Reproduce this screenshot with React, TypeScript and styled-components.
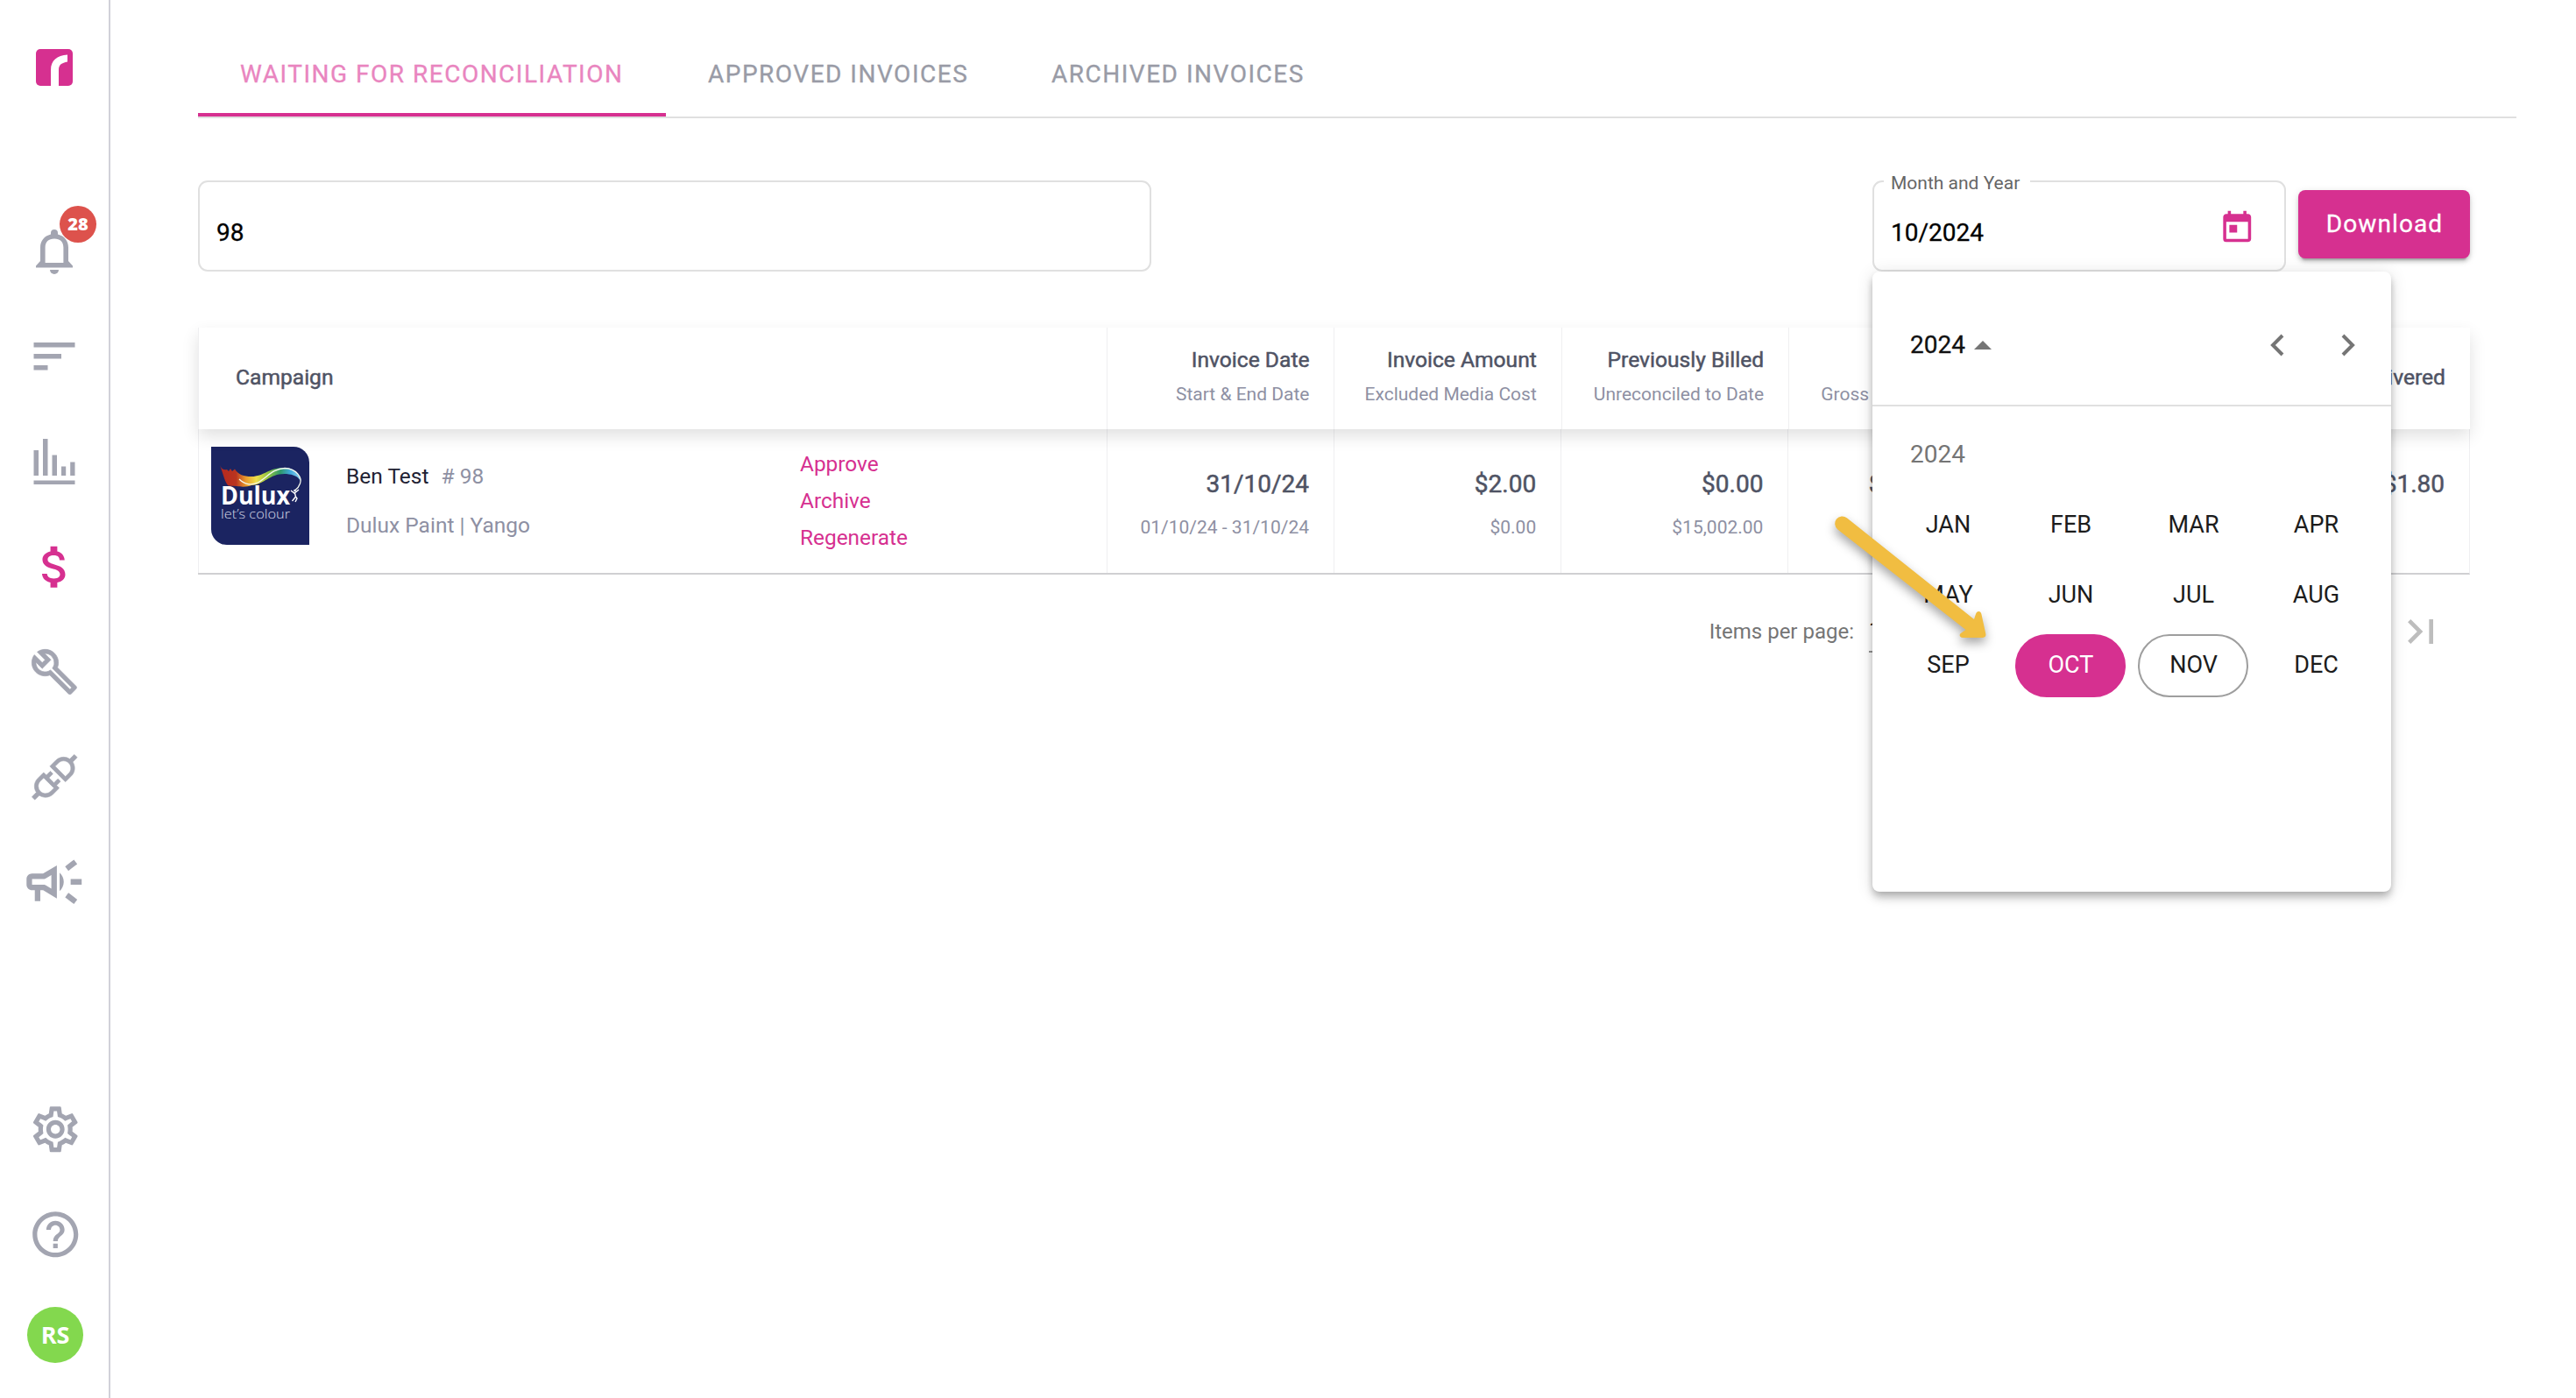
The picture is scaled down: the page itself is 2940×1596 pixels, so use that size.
import { useState } from 'react'
import styled, { createGlobalStyle } from 'styled-components'
import { AiOutlineApi } from 'react-icons/ai'
import {
  MdHelpOutline,
  MdLastPage,
  MdOutlineBuild,
  MdOutlineCampaign,
  MdOutlineSettings,
  MdToday,
} from 'react-icons/md'

const tabs = [
  { label: 'Waiting for reconciliation', width: 534 },
  { label: 'Approved invoices', width: 392 },
  { label: 'Archived invoices', width: 390 },
]

const columns = [
  { title: 'Invoice Date', sub: 'Start & End Date', value: '31/10/24', detail: '01/10/24 - 31/10/24' },
  { title: 'Invoice Amount', sub: 'Excluded Media Cost', value: '$2.00', detail: '$0.00' },
  { title: 'Previously Billed', sub: 'Unreconciled to Date', value: '$0.00', detail: '$15,002.00' },
  { title: 'Net', sub: 'Gross Campaign Fee', value: '$15,004.00', detail: '' },
  { title: 'Margin', sub: '', value: '$0.20', detail: '' },
  { title: 'Delivered', sub: '', value: '$1.80', detail: '' },
]

const months = ['JAN', 'FEB', 'MAR', 'APR', 'MAY', 'JUN', 'JUL', 'AUG', 'SEP', 'OCT', 'NOV', 'DEC']

function LogoMark() {
  return (
    <svg width="42" height="42" viewBox="0 0 42 42">
      <rect width="42" height="42" rx="5" fill="#d63090" />
      <path
        d="M17 42V24C17 13 24 7.600 36 6.600V14.600C29.500 16 26 17.500 26 24V42Z"
        fill="#fff"
      />
    </svg>
  )
}

function BellIcon() {
  return (
    <svg width="42" height="51" viewBox="0 0 42 51" fill="currentColor">
      <path
        fillRule="evenodd"
        d="M17 5.500V4a4 4 0 0 1 8 0v1.500C32.500 7.400 37 13 37 20.500V36l5 5.500V43.500H0V41.500L5 36V20.500C5 13 9.500 7.400 17 5.500ZM10.600 38H31.400V20.500C31.400 14 27.500 10.400 21 10.400S10.600 14 10.600 20.500Z"
      />
      <path d="M16 46h10a5 5 0 0 1-10 0Z" />
    </svg>
  )
}

function ListIcon() {
  return (
    <svg width="48" height="32" viewBox="0 0 48 32" fill="currentColor">
      <path d="M.5 0h47v5.500H.5zM.5 13h31.500v5.500H.5zM.5 26h16v5.500H.5z" />
    </svg>
  )
}

function ChartIcon() {
  return (
    <svg width="48" height="52" viewBox="0 0 48 52" fill="currentColor">
      <path d="M.5 13H6v29H.5zM11 0h5.500v42H11zM21.500 18.500H27V42h-5.500zM32 31.500h5.200V42H32zM42.200 26.500h5.300V42h-5.300zM.5 47.500h47V52H.5z" />
    </svg>
  )
}

function DollarIcon() {
  return (
    <svg width="62.500" height="62.500" viewBox="-0.200 0 24 24" fill="currentColor">
      <path d="M11.800 10.900c-2.270-.59-3-1.200-3-2.150 0-1.090 1.010-1.850 2.700-1.850 1.780 0 2.440.85 2.500 2.100h2.210c-.07-1.720-1.120-3.300-3.210-3.810V3h-3v2.160c-1.940.42-3.500 1.680-3.500 3.610 0 2.310 1.910 3.460 4.700 4.130 2.500.6 3 1.480 3 2.410 0 .69-.49 1.790-2.700 1.790-2.060 0-2.870-.92-2.980-2.100h-2.200c.12 2.190 1.760 3.420 3.680 3.830V21h3v-2.150c1.950-.37 3.500-1.500 3.500-3.550 0-2.840-2.430-3.810-4.700-4.400z" />
    </svg>
  )
}

function DuluxLogo() {
  return (
    <svg width="112" height="112" viewBox="0 0 112 112">
      <defs>
        <linearGradient id="ribbon" gradientUnits="userSpaceOnUse" x1="10" y1="0" x2="102" y2="0">
          <stop offset="0" stopColor="#b5281f" />
          <stop offset=".2" stopColor="#b93420" />
          <stop offset=".32" stopColor="#ea9a2c" />
          <stop offset=".45" stopColor="#f0e04a" />
          <stop offset=".6" stopColor="#8fc140" />
          <stop offset=".75" stopColor="#2f9a6a" />
          <stop offset=".87" stopColor="#3fa9dc" />
          <stop offset="1" stopColor="#8fd0ee" />
        </linearGradient>
      </defs>
      <rect width="112" height="112" fill="#1b2461" />
      <path
        d="M10 21C12 26 15 27 18 26L20 28 22 25 24 28 27 25.500C31 32 37 34 46 34C60 34 66 24 82 24C94 24 101 30 102 39C98 33 94 32 86 31C66 30 62 43 46 44C42 46 34 46 29 45L20 44.500C16 42 14 32 10 21Z"
        fill="url(#ribbon)"
      />
      <path
        d="M32 37C38 43 46 44.500 53 41C64 35 70 25 84 24.500C98 25 104 36 101.500 42C100.500 45 98 48 96 49.500"
        fill="none"
        stroke="#f4f8ee"
        strokeWidth="1.300"
      />
      <path
        d="M91 50l4 3 5-4M95.500 53l1 4-4 5M96.500 57l1.500 2-2 4"
        fill="none"
        stroke="#fff"
        strokeWidth="1.400"
      />
      <circle cx="95.500" cy="50" r="1.300" fill="#fff" />
      <BrandText x="11" y="65.500" textLength="79" lengthAdjust="spacingAndGlyphs">
        Dulux
      </BrandText>
      <BrandTagline x="11" y="81.500" textLength="79" lengthAdjust="spacingAndGlyphs">
        let’s colour
      </BrandTagline>
    </svg>
  )
}

function PointerArrow() {
  return (
    <ArrowLayer width="210" height="180" viewBox="0 0 210 180">
      <path
        d="M27.800 11.200L173 127L174.800 121.500C176 117 180.600 117 181.400 121L186.300 143.500C186.800 146.200 185.500 147.900 183 147.900H160C156.300 147.900 155.500 144.300 158.500 142.500L163.500 139L17.400 24.400A8.200 8.200 0 0 1 27.800 11.200Z"
        fill="#f1bd41"
      />
    </ArrowLayer>
  )
}

export default function App() {
  const [activeTab, setActiveTab] = useState(0)
  const [search, setSearch] = useState('98')
  const [month, setMonth] = useState('OCT')

  return (
    <Layout>
      <GlobalStyle />
      <Sidebar>
        <Brand>
          <LogoMark />
        </Brand>
        <NavItem>
          <BellIcon />
          <Badge>28</Badge>
        </NavItem>
        <NavItem>
          <ListIcon />
        </NavItem>
        <NavItem>
          <ChartIcon />
        </NavItem>
        <NavItem $active>
          <DollarIcon />
        </NavItem>
        <NavItem>
          <WrenchIcon size={56} />
        </NavItem>
        <NavItem>
          <PlugIcon size={64.5} />
        </NavItem>
        <NavItem>
          <MdOutlineCampaign size={75.5} />
        </NavItem>
        <NavFooter>
          <NavItem>
            <MdOutlineSettings size={62.5} />
          </NavItem>
          <NavItem>
            <MdHelpOutline size={62.5} />
          </NavItem>
          <Avatar>RS</Avatar>
        </NavFooter>
      </Sidebar>

      <Main>
        <TabBar>
          {tabs.map((tab, index) => (
            <Tab
              key={tab.label}
              $active={activeTab === index}
              $width={tab.width}
              onClick={() => setActiveTab(index)}>
              {tab.label}
            </Tab>
          ))}
        </TabBar>

        <Filters>
          <SearchInput value={search} onChange={(event) => setSearch(event.target.value)} />
          <DateField>
            <DateLabel>Month and Year</DateLabel>
            <DateValue>10/2024</DateValue>
            <CalendarIcon size={42.5} />
            <Calendar>
              <CalendarHeader>
                <PeriodButton>
                  2024
                  <Triangle />
                </PeriodButton>
                <Arrows>
                  <Chevron viewBox="0 0 16 26">
                    <path d="M14 2L3 13L14 24" />
                  </Chevron>
                  <Chevron viewBox="0 0 16 26">
                    <path d="M2 2L13 13L2 24" />
                  </Chevron>
                </Arrows>
              </CalendarHeader>
              <YearLabel>2024</YearLabel>
              <MonthGrid>
                {months.map((name) => (
                  <Month
                    key={name}
                    $selected={month === name}
                    $today={name === 'NOV'}
                    onClick={() => setMonth(name)}>
                    {name}
                  </Month>
                ))}
              </MonthGrid>
            </Calendar>
            <PointerArrow />
          </DateField>
          <DownloadButton>Download</DownloadButton>
        </Filters>

        <Table>
          <HeaderRow>
            <CampaignHeader>Campaign</CampaignHeader>
            {columns.map((column) => (
              <HeaderCell key={column.title}>
                <HeaderTitle>{column.title}</HeaderTitle>
                {column.sub && <HeaderSub>{column.sub}</HeaderSub>}
              </HeaderCell>
            ))}
          </HeaderRow>
          <Row>
            <CampaignCell>
              <LogoFrame>
                <DuluxLogo />
              </LogoFrame>
              <CampaignInfo>
                <CampaignName>
                  Ben Test <CampaignId># 98</CampaignId>
                </CampaignName>
                <Client>Dulux Paint | Yango</Client>
              </CampaignInfo>
              <Actions>
                <Action>Approve</Action>
                <Action>Archive</Action>
                <Action>Regenerate</Action>
              </Actions>
            </CampaignCell>
            {columns.map((column) => (
              <Cell key={column.title}>
                <Value>{column.value}</Value>
                <Detail>{column.detail}</Detail>
              </Cell>
            ))}
          </Row>
        </Table>

        <Paginator>
          <span>Items per page:</span>
          <PageSize>10</PageSize>
          <MdLastPage size={56} color="#bdbdbd" />
        </Paginator>
      </Main>
    </Layout>
  )
}

const GlobalStyle = createGlobalStyle`
  * {
    box-sizing: border-box;
  }
  body {
    margin: 0;
    background: #fff;
    font-family: Roboto, 'Liberation Sans', sans-serif;
  }
  button, input {
    font-family: inherit;
    border: none;
    background: none;
    padding: 0;
    margin: 0;
    outline: none;
  }
  svg {
    display: block;
    flex-shrink: 0;
  }
`

const Layout = styled.div`
  display: flex;
  width: 2940px;
  height: 1596px;
  overflow: hidden;
`

const Sidebar = styled.nav`
  display: flex;
  flex-direction: column;
  align-items: center;
  width: 126px;
  height: 100%;
  border-right: 2px solid #d1d1d9;
  color: #a3a5b1;
`

const Brand = styled.div`
  height: 227px;
  padding-top: 56px;
`

const NavItem = styled.div<{ $active?: boolean }>`
  position: relative;
  display: flex;
  align-items: center;
  justify-content: center;
  width: 124px;
  height: 120px;
  color: ${({ $active }) => ($active ? '#d63090' : 'inherit')};
`

const WrenchIcon = styled(MdOutlineBuild)`
  stroke-width: 0.3px;
  /* bounding path of the icon must stay invisible */
  path[fill='none'] {
    stroke: none;
  }
`

const PlugIcon = styled(AiOutlineApi)`
  stroke-width: 10px;
`

const Badge = styled.span`
  position: absolute;
  left: 68px;
  top: 8px;
  width: 42px;
  height: 42px;
  border-radius: 50%;
  background: #dd524c;
  color: #fff;
  font: 800 20px/41px 'Open Sans', 'Noto Sans', sans-serif;
  text-align: center;
`

const NavFooter = styled.div`
  display: flex;
  flex-direction: column;
  align-items: center;
  margin-top: auto;
  padding: 0 0 40px 2px;
`

const Avatar = styled.div`
  width: 64px;
  height: 64px;
  margin-top: 23px;
  border-radius: 50%;
  background: #83d84e;
  color: #fff;
  font: 700 27px/64px 'Open Sans', 'Noto Sans', sans-serif;
  text-align: center;
`

const Main = styled.main`
  flex: 1;
  padding: 36px 68px 0 100px;
`

const TabBar = styled.div`
  display: flex;
  height: 99px;
  border-bottom: 2px solid #e0e0e0;
`

const Tab = styled.button<{ $active: boolean; $width: number }>`
  width: ${({ $width }) => $width}px;
  height: 97px;
  padding: 0 0 0 48px;
  text-align: left;
  text-transform: uppercase;
  font-size: 28px;
  letter-spacing: 1.5px;
  white-space: nowrap;
  color: ${({ $active }) => ($active ? '#e985bf' : '#999ba6')};
  -webkit-text-stroke: 0.3px currentColor;
  box-shadow: ${({ $active }) => ($active ? 'inset 0 -4px 0 #d63090' : 'none')};
`

const Filters = styled.div`
  display: flex;
  align-items: flex-start;
  margin-top: 71px;
`

const SearchInput = styled.input`
  width: 1088px;
  height: 104px;
  padding: 14px 20px 0 19px;
  border: 2px solid #e0e0e0;
  border-radius: 11px;
  font-size: 28px;
  color: #000;
  -webkit-text-stroke: 0.3px currentColor;
`

const DateField = styled.div`
  position: relative;
  display: flex;
  align-items: center;
  justify-content: space-between;
  width: 472px;
  height: 104px;
  margin-left: 823px;
  padding: 0 33px 0 19px;
  border: 2px solid #e0e0e0;
  border-radius: 11px;
`

const DateLabel = styled.label`
  position: absolute;
  left: 11px;
  top: -12px;
  padding: 0 12px 0 8px;
  background: #fff;
  font-size: 21px;
  line-height: 26px;
  color: #666;
`

const DateValue = styled.span`
  padding-top: 14px;
  font-size: 28px;
  color: #000;
  -webkit-text-stroke: 0.3px currentColor;
`

const CalendarIcon = styled(MdToday)`
  margin-top: 5px;
  color: #d63090;
`

const Calendar = styled.div`
  position: absolute;
  z-index: 2;
  left: -2px;
  top: 102px;
  width: 592px;
  height: 708px;
  border-radius: 8px;
  background: #fff;
  box-shadow:
    0 4px 8px -2px rgba(0, 0, 0, 0.2),
    0 8px 10px rgba(0, 0, 0, 0.14),
    0 2px 20px rgba(0, 0, 0, 0.12);
`

const CalendarHeader = styled.div`
  display: flex;
  align-items: center;
  justify-content: space-between;
  height: 154px;
  padding: 15px 41px 0 43px;
  border-bottom: 2px solid #e0e0e0;
`

const PeriodButton = styled.button`
  display: flex;
  align-items: center;
  gap: 10px;
  font-size: 28px;
  color: #111;
  -webkit-text-stroke: 0.3px currentColor;
`

const Triangle = styled.span`
  border: 10px solid transparent;
  border-top: 0;
  border-bottom: 10px solid #757575;
`

const Arrows = styled.div`
  display: flex;
  gap: 65px;
`

const Chevron = styled.svg`
  width: 16px;
  height: 26px;
  fill: none;
  stroke: #757575;
  stroke-width: 4px;
`

const YearLabel = styled.div`
  height: 96px;
  padding: 35px 43px 0;
  font-size: 28px;
  line-height: 40px;
  color: #757575;
`

const MonthGrid = styled.div`
  display: grid;
  grid-template-columns: repeat(4, 140px);
  grid-auto-rows: 80px;
  padding: 0 16px;
`

const Month = styled.button<{ $selected: boolean; $today: boolean }>`
  margin: 4px 7px;
  padding: 0 0 3px 1px;
  border: 2px solid ${({ $selected, $today }) =>
    $selected ? '#d63090' : $today ? '#9e9e9e' : 'transparent'};
  border-radius: 36px;
  background: ${({ $selected }) => ($selected ? '#d63090' : 'transparent')};
  color: ${({ $selected }) => ($selected ? '#fff' : '#1c1c1c')};
  font-size: 27px;
`

const ArrowLayer = styled.svg`
  position: absolute;
  z-index: 3;
  left: -59px;
  top: 372px;
  overflow: visible;
  filter: drop-shadow(0 6px 6px rgba(0, 0, 0, 0.35));
`

const DownloadButton = styled.button`
  width: 196px;
  height: 78px;
  margin: 11px 0 0 14px;
  padding: 0 0 2px 1px;
  border-radius: 8px;
  background: #d63090;
  color: #fff;
  font-size: 28px;
  letter-spacing: 1.1px;
  -webkit-text-stroke: 0.3px currentColor;
  box-shadow:
    0 6px 2px -4px rgba(0, 0, 0, 0.2),
    0 4px 4px rgba(0, 0, 0, 0.14),
    0 2px 10px rgba(0, 0, 0, 0.12);
`

const Table = styled.div`
  width: 2593px;
  margin-top: 64px;
`

const HeaderRow = styled.div`
  position: relative;
  display: grid;
  grid-template-columns: 4fr repeat(6, 1fr);
  height: 116px;
  background: #fff;
  box-shadow: 0 8px 18px rgba(0, 0, 0, 0.12);
`

const CampaignHeader = styled.div`
  padding-left: 42px;
  border-left: 1px solid #efeff1;
  font-size: 24.6px;
  line-height: 114px;
  color: #4f5364;
  -webkit-text-stroke: 0.5px currentColor;
`

const HeaderCell = styled.div`
  display: flex;
  flex-direction: column;
  justify-content: center;
  align-items: flex-end;
  padding: 0 28px 3px 0;
  border-left: 1px solid #efeff1;
`

const HeaderTitle = styled.div`
  font-size: 24.6px;
  line-height: 39px;
  color: #4f5364;
  -webkit-text-stroke: 0.5px currentColor;
`

const HeaderSub = styled.div`
  font-size: 21px;
  line-height: 40px;
  white-space: nowrap;
  color: #8e90a3;
`

const Row = styled.div`
  display: grid;
  grid-template-columns: 4fr repeat(6, 1fr);
  height: 166px;
  border-right: 1px solid #efeff1;
  border-bottom: 2px solid #d0d0d2;
`

const CampaignCell = styled.div`
  display: flex;
  padding: 20px 0 0 14px;
  border-left: 1px solid #efeff1;
`

const LogoFrame = styled.div`
  width: 112px;
  height: 112px;
  border-radius: 0 18px 0 18px;
  overflow: hidden;
`

const BrandText = styled.text`
  font: 700 28px 'Open Sans', 'Noto Sans', sans-serif;
  fill: #fff;
`

const BrandTagline = styled.text`
  font: 300 15px 'Open Sans', 'Noto Sans', sans-serif;
  fill: #d8dbe8;
`

const CampaignInfo = styled.div`
  width: 560px;
  padding: 6px 0 0 42px;
  line-height: 56px;
`

const CampaignName = styled.div`
  font-size: 24.5px;
  color: #1f2233;
`

const CampaignId = styled.span`
  margin-left: 8px;
  color: #8e90a3;
`

const Client = styled.div`
  font-size: 24.5px;
  color: #8e90a3;
`

const Actions = styled.div`
  display: flex;
  flex-direction: column;
  align-items: flex-start;
  margin-top: -1px;
`

const Action = styled.button`
  font-size: 24.4px;
  line-height: 42px;
  color: #d63090;
`

const Cell = styled.div`
  padding: 43px 28px 0 0;
  border-left: 1px solid #efeff1;
  text-align: right;
`

const Value = styled.div`
  font-size: 28px;
  line-height: 40px;
  color: #4f5364;
  -webkit-text-stroke: 0.5px currentColor;
`

const Detail = styled.div`
  font-size: 21px;
  line-height: 58px;
  color: #8e90a3;
`

const Paginator = styled.div`
  display: flex;
  align-items: center;
  justify-content: flex-end;
  height: 56px;
  margin-top: 37px;
  padding-right: 81px;
  font-size: 24px;
  color: #757575;
`

const PageSize = styled.span`
  width: 112px;
  height: 48px;
  margin: 0 490px 0 17px;
  border-bottom: 2px solid #949494;
  line-height: 44px;
  color: #212121;
`
